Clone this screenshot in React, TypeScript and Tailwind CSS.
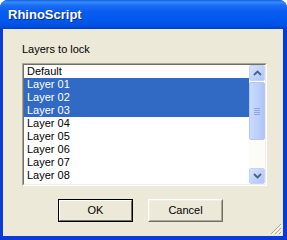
import React from "react";

const items = [
  "Default",
  "Layer 01",
  "Layer 02",
  "Layer 03",
  "Layer 04",
  "Layer 05",
  "Layer 06",
  "Layer 07",
  "Layer 08",
  "Layer 09",
];
const selected = new Set([1, 2, 3]);

function ScrollBtn({ dir }: { dir: "up" | "down" }) {
  return (
    <div className="w-[16px] h-[16px] rounded-[2px] border border-[#c3d3fd] bg-[linear-gradient(135deg,#d9e5fe_0%,#c2d3fc_50%,#b0c5f7_100%)] flex items-center justify-center">
      <svg width="9" height="6" viewBox="0 0 9 6">
        {dir === "up" ? (
          <path d="M1 5 L4.5 1.5 L8 5" stroke="#4d6185" strokeWidth="1.8" fill="none" />
        ) : (
          <path d="M1 1 L4.5 4.5 L8 1" stroke="#4d6185" strokeWidth="1.8" fill="none" />
        )}
      </svg>
    </div>
  );
}

export default function App() {
  return (
    <div
      className="w-[287px] h-[240px] bg-white"
      style={{ fontFamily: '"Liberation Sans", Arial, sans-serif' }}
    >
      <div className="w-[287px] h-[240px] rounded-t-[8px] bg-[#0a3ad8] flex flex-col overflow-hidden">
        <div className="h-[29px] shrink-0 bg-[linear-gradient(180deg,#0a5fe6_0%,#3b8dfa_7%,#1a6ff5_18%,#0a5cf0_40%,#0058ee_70%,#0050e0_90%,#0040cc_100%)] flex items-center pl-[8px]">
          <span className="text-white font-bold text-[13px] leading-none [text-shadow:1px_1px_0_#0a2a8a]">
            RhinoScript
          </span>
        </div>
        <div className="flex-1 ml-[3px] mr-[4px] mb-[4px] bg-[#ece9d8] relative flex flex-col pl-[19px] pt-[14px]">
          <div className="text-[11px] leading-[13px] text-black">Layers to lock</div>
          <div className="mt-[7px] w-[245px] h-[123px] border border-t-[#aca899] border-l-[#aca899] border-r-white border-b-white">
            <div className="w-full h-full border border-t-[#716f64] border-l-[#716f64] border-r-[#f1efe2] border-b-[#f1efe2] bg-white flex overflow-hidden">
              <div className="flex-1 flex flex-col">
                {items.map((it, i) => (
                  <div
                    key={it}
                    className={
                      "h-[13px] shrink-0 pl-[3px] text-[11px] leading-[13px] whitespace-nowrap " +
                      (selected.has(i) ? "bg-[#316ac5] text-white" : "text-black")
                    }
                  >
                    {it}
                  </div>
                ))}
              </div>
              <div className="w-[16px] h-full flex flex-col bg-[#fbfbf8]">
                <ScrollBtn dir="up" />
                <div className="mt-[1px] h-[58px] rounded-[2px] border border-[#b3c6f5] bg-[linear-gradient(90deg,#cbdafd_0%,#bccffb_60%,#aec4f7_100%)] flex flex-col items-center justify-center gap-[1px]">
                  <div className="w-[6px] h-[1px] bg-[#8ca6e8]" />
                  <div className="w-[6px] h-[1px] bg-[#8ca6e8]" />
                  <div className="w-[6px] h-[1px] bg-[#8ca6e8]" />
                  <div className="w-[6px] h-[1px] bg-[#8ca6e8]" />
                </div>
                <div className="flex-1" />
                <ScrollBtn dir="down" />
              </div>
            </div>
          </div>
          <div className="flex mt-[13px] ml-[36px] gap-[15px]">
            <div className="w-[75px] h-[23px] border border-black">
              <div className="w-full h-full border border-t-white border-l-white border-r-[#716f64] border-b-[#716f64] flex items-center justify-center text-[11px] text-black">
                OK
              </div>
            </div>
            <div className="w-[75px] h-[23px] border border-t-white border-l-white border-r-[#716f64] border-b-[#716f64]">
              <div className="w-full h-full border border-t-[#f1efe2] border-l-[#f1efe2] border-r-[#aca899] border-b-[#aca899] flex items-center justify-center text-[11px] text-black">
                Cancel
              </div>
            </div>
          </div>
          <svg
            className="absolute right-[1px] bottom-[1px]"
            width="12"
            height="12"
            viewBox="0 0 12 12"
          >
            <path d="M11 1 L1 11 M11 5 L5 11 M11 9 L9 11" stroke="#aca899" strokeWidth="1" />
            <path d="M12 2 L2 12 M12 6 L6 12 M12 10 L10 12" stroke="#ffffff" strokeWidth="1" />
          </svg>
        </div>
      </div>
    </div>
  );
}
